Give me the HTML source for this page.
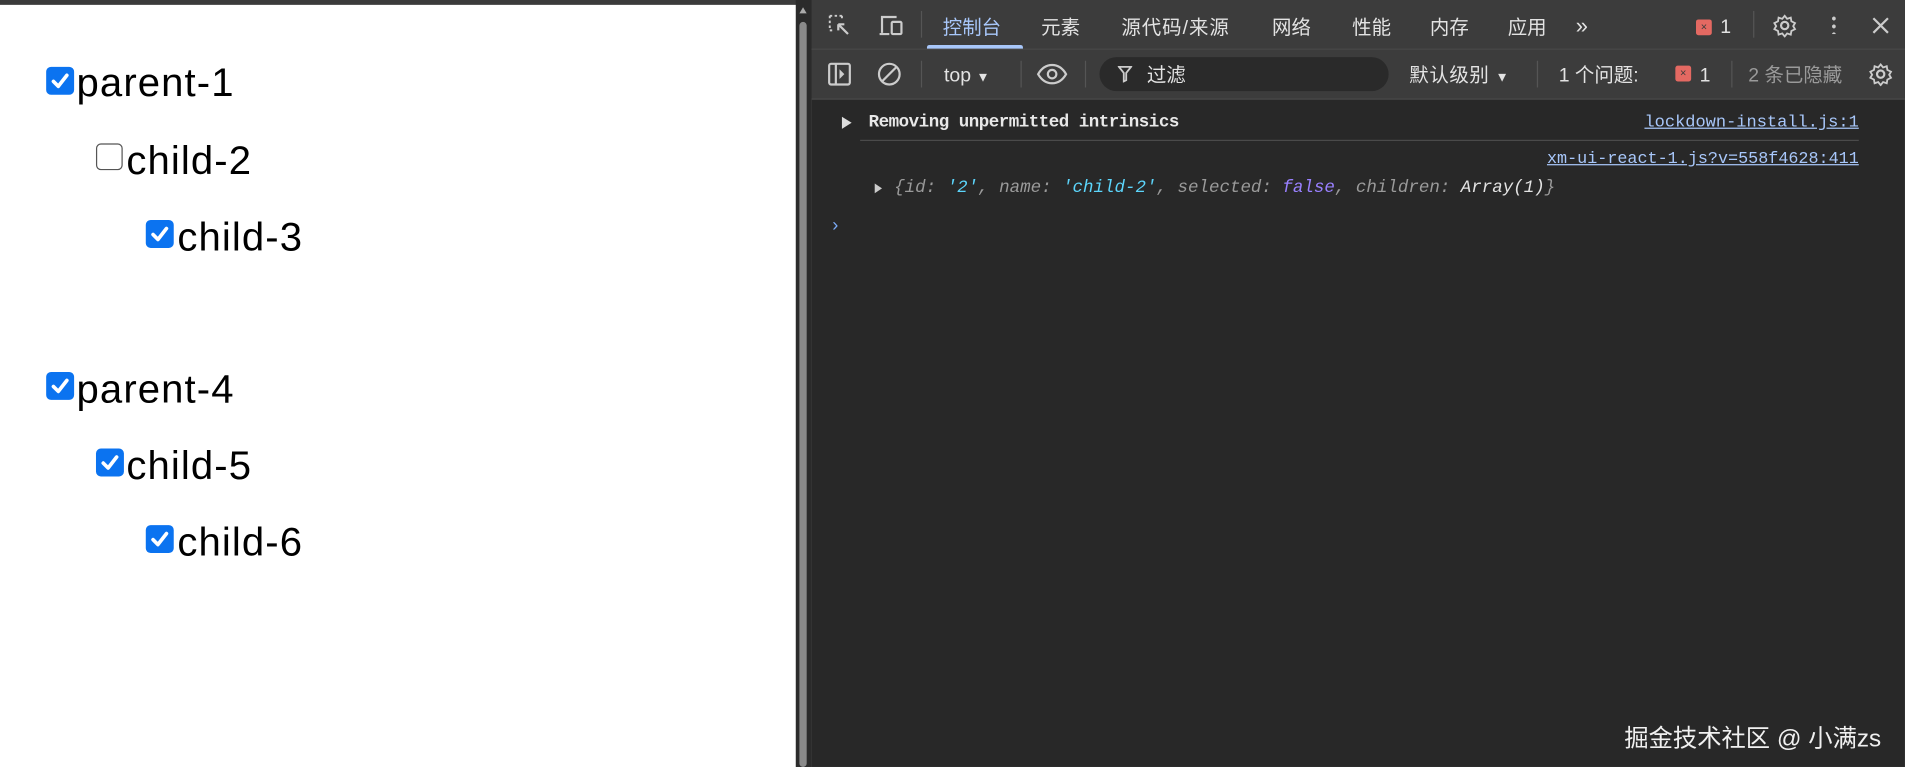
<!DOCTYPE html>
<html><head><meta charset="utf-8"><style>
html,body{margin:0;padding:0;width:1905px;height:767px;overflow:hidden;background:#fff}
#w{position:absolute;left:0;top:0;width:1568px;height:631px;transform:scale(1.2149,1.2155);transform-origin:0 0;font-family:"Liberation Sans","Noto Sans CJK SC",sans-serif}
.a{position:absolute;white-space:nowrap}
.topbar{position:absolute;left:0;top:0;width:656px;height:4px;background:#3b3b3b}
.cb{position:absolute;width:23px;height:23px;border-radius:4px;background:#0b73f0}
.cb svg{position:absolute;left:3px;top:3px}
.cbu{position:absolute;width:20px;height:20px;border-radius:4px;border:1.5px solid #555;background:#fff}
.lt{position:absolute;font-size:33px;letter-spacing:0.9px;color:#000;line-height:32px}
.dt{position:absolute;left:668px;top:0;width:900px;height:631px;background:#282828}
.sb{position:absolute;left:655px;top:0;width:13px;height:631px;background:#2b2b2b}
.t1{position:absolute;left:0;top:0;width:900px;height:40px;background:#3c3c3c;border-bottom:1px solid #4a4a4a}
.t2{position:absolute;left:0;top:41px;width:900px;height:40px;background:#3c3c3c;border-bottom:1px solid #4a4a4a}
.tab{position:absolute;top:15px;font-size:16px;line-height:18px;color:#e3e3e3}
.t2 .tab{top:13px}
.sep{position:absolute;width:1px;height:22px;background:#555}
.mono{font-family:"Liberation Mono","Noto Sans CJK SC",monospace;font-size:14.4px}
</style></head><body><div id="w">
<div class="topbar"></div>
<div class="cb" style="left:38px;top:55px"><svg width="17" height="17" viewBox="0 0 17 17"><path d="M3 9l4 4 7-9" stroke="#fff" stroke-width="3" fill="none" stroke-linecap="round" stroke-linejoin="round"/></svg></div>
<div class="lt" style="left:63px;top:52px">parent-1</div>
<div class="cbu" style="left:79px;top:118px"></div>
<div class="lt" style="left:104px;top:116px">child-2</div>
<div class="cb" style="left:120px;top:181px"><svg width="17" height="17" viewBox="0 0 17 17"><path d="M3 9l4 4 7-9" stroke="#fff" stroke-width="3" fill="none" stroke-linecap="round" stroke-linejoin="round"/></svg></div>
<div class="lt" style="left:146px;top:179px">child-3</div>
<div class="cb" style="left:38px;top:306px"><svg width="17" height="17" viewBox="0 0 17 17"><path d="M3 9l4 4 7-9" stroke="#fff" stroke-width="3" fill="none" stroke-linecap="round" stroke-linejoin="round"/></svg></div>
<div class="lt" style="left:63px;top:304px">parent-4</div>
<div class="cb" style="left:79px;top:369px"><svg width="17" height="17" viewBox="0 0 17 17"><path d="M3 9l4 4 7-9" stroke="#fff" stroke-width="3" fill="none" stroke-linecap="round" stroke-linejoin="round"/></svg></div>
<div class="lt" style="left:104px;top:367px">child-5</div>
<div class="cb" style="left:120px;top:432px"><svg width="17" height="17" viewBox="0 0 17 17"><path d="M3 9l4 4 7-9" stroke="#fff" stroke-width="3" fill="none" stroke-linecap="round" stroke-linejoin="round"/></svg></div>
<div class="lt" style="left:146px;top:430px">child-6</div>
<div class="sb"><div style="position:absolute;left:3px;top:18px;width:6px;height:613px;border-radius:3px;background:#8a8a8a"></div><div style="position:absolute;left:3px;top:6px;width:0;height:0;border-left:3px solid transparent;border-right:3px solid transparent;border-bottom:5px solid #aaa"></div></div>
<div class="dt">
 <div class="t1">
  <svg class="a" style="left:13px;top:11px" width="20" height="20" viewBox="0 0 20 20"><path d="M2 2h10M2 2v12M2 14h4M12 2v4" stroke="#ccc" stroke-width="1.6" stroke-dasharray="2 2" fill="none"/><path d="M9 9l8 8M9 9h5M9 9v5" stroke="#ccc" stroke-width="1.8" fill="none"/></svg>
  <svg class="a" style="left:55px;top:11px" width="22" height="20" viewBox="0 0 22 20"><path d="M3 16V3h12M1 17h8" stroke="#ccc" stroke-width="1.8" fill="none"/><rect x="11" y="7" width="8" height="10" rx="1" stroke="#ccc" stroke-width="1.8" fill="none"/></svg>
  <div class="sep" style="left:90px;top:9px"></div>
  <div class="tab" style="left:108px;color:#a8c7fa">控制台</div>
  <div class="a" style="left:95px;top:37px;width:79px;height:3px;background:#a8c7fa;border-radius:2px 2px 0 0"></div>
  <div class="tab" style="left:189px">元素</div>
  <div class="tab" style="left:255px;letter-spacing:0.8px">源代码/来源</div>
  <div class="tab" style="left:379px">网络</div>
  <div class="tab" style="left:445px">性能</div>
  <div class="tab" style="left:509px">内存</div>
  <div class="tab" style="left:573px">应用</div>
  <div class="tab" style="left:629px;top:12px;font-size:18px">»</div>
  <div class="a" style="left:728px;top:16px;width:13px;height:13px;background:#e46962;border-radius:2px;color:#3c3c3c;font-size:9px;text-align:center;line-height:13px">×</div>
  <div class="tab" style="left:748px;top:14px">1</div>
  <div class="sep" style="left:775px;top:9px"></div>
  <svg class="a" style="left:791px;top:11px" width="20" height="20" viewBox="0 0 20 20"><circle cx="10" cy="10" r="3" stroke="#ccc" stroke-width="1.8" fill="none"/><path d="M10 2l2 2.5 3-1 .5 3 3 1.5-1.5 2.5 1.5 2.5-3 1.5-.5 3-3-1-2 2.5-2-2.5-3 1-.5-3-3-1.5 1.5-2.5-1.5-2.5 3-1.5.5-3 3 1z" stroke="#ccc" stroke-width="1.5" fill="none"/></svg>
  <div class="a" style="left:840px;top:12px;width:3px;height:16px;background:radial-gradient(circle,#ccc 1.5px,transparent 1.6px) 0 0/3px 6.5px"></div>
  <svg class="a" style="left:873px;top:14px" width="14" height="14" viewBox="0 0 14 14"><path d="M1 1l12 12M13 1L1 13" stroke="#ccc" stroke-width="1.8"/></svg>
 </div>
 <div class="t2">
  <svg class="a" style="left:13px;top:10px" width="20" height="20" viewBox="0 0 20 20"><rect x="1.5" y="1.5" width="17" height="17" rx="1.5" stroke="#ccc" stroke-width="1.8" fill="none"/><path d="M7 2v16" stroke="#ccc" stroke-width="1.8"/><path d="M10 6l4 4-4 4z" fill="#ccc"/></svg>
  <svg class="a" style="left:54px;top:10px" width="20" height="20" viewBox="0 0 20 20"><circle cx="10" cy="10" r="8.5" stroke="#ccc" stroke-width="1.8" fill="none"/><path d="M4 16L16 4" stroke="#ccc" stroke-width="1.8"/></svg>
  <div class="sep" style="left:90px;top:9px"></div>
  <div class="tab" style="left:109px">top <span style="font-size:11px">▼</span></div>
  <div class="sep" style="left:172px;top:9px"></div>
  <svg class="a" style="left:185px;top:11px" width="26" height="18" viewBox="0 0 26 18"><path d="M1.5 9C5 3 9 1.5 13 1.5S21 3 24.5 9C21 15 17 16.5 13 16.5S5 15 1.5 9z" stroke="#ccc" stroke-width="1.8" fill="none"/><circle cx="13" cy="9" r="3.5" stroke="#ccc" stroke-width="1.8" fill="none"/></svg>
  <div class="sep" style="left:225px;top:9px"></div>
  <div class="a" style="left:237px;top:6px;width:238px;height:28px;border-radius:14px;background:#2a2a2a"></div>
  <svg class="a" style="left:252px;top:13px" width="12" height="14" viewBox="0 0 12 14"><path d="M1 1h10L7 6v6L5 13V6z" stroke="#ccc" stroke-width="1.5" fill="none"/></svg>
  <div class="tab" style="left:276px">过滤</div>
  <div class="tab" style="left:492px;letter-spacing:0.5px">默认级别 <span style="font-size:11px">▼</span></div>
  <div class="sep" style="left:597px;top:9px"></div>
  <div class="tab" style="left:615px">1 个问题:</div>
  <div class="a" style="left:711px;top:13px;width:13px;height:13px;background:#e46962;border-radius:2px;color:#3c3c3c;font-size:9px;text-align:center;line-height:13px">×</div>
  <div class="tab" style="left:731px">1</div>
  <div class="sep" style="left:757px;top:9px"></div>
  <div class="tab" style="left:771px;color:#9a9a9a">2 条已隐藏</div>
  <svg class="a" style="left:870px;top:10px" width="20" height="20" viewBox="0 0 20 20"><circle cx="10" cy="10" r="3" stroke="#ccc" stroke-width="1.8" fill="none"/><path d="M10 2l2 2.5 3-1 .5 3 3 1.5-1.5 2.5 1.5 2.5-3 1.5-.5 3-3-1-2 2.5-2-2.5-3 1-.5-3-3-1.5 1.5-2.5-1.5-2.5 3-1.5.5-3 3 1z" stroke="#ccc" stroke-width="1.5" fill="none"/></svg>
 </div>
 <div class="a" style="left:25px;top:96px;width:0;height:0;border-top:5px solid transparent;border-bottom:5px solid transparent;border-left:8px solid #ddd"></div>
 <div class="a mono" style="left:47px;top:93px;color:#e8e8e8;font-weight:bold;font-size:14.4px;letter-spacing:-0.4px">Removing unpermitted intrinsics</div>
 <div class="a mono" style="right:38px;top:93px;color:#a8c7fa;text-decoration:underline;font-size:14px">lockdown-install.js:1</div>
 <div class="a" style="left:40px;top:115px;width:822px;height:1px;background:#4a4a4a"></div>
 <div class="a mono" style="right:38px;top:124px;color:#a8c7fa;text-decoration:underline;font-size:13.8px">xm-ui-react-1.js?v=558f4628:411</div>
 <div class="a" style="left:52px;top:151px;width:0;height:0;border-top:4px solid transparent;border-bottom:4px solid transparent;border-left:6px solid #ccc"></div>
 <div class="a mono" style="left:68px;top:147px;font-style:italic;color:#9a9a9a">{id: <span style="color:#5cd5fb">'2'</span>, name: <span style="color:#5cd5fb">'child-2'</span>, selected: <span style="color:#9980ff">false</span>, children: <span style="color:#e3e3e3">Array(1)</span>}</div>
 <div class="a" style="left:17px;top:177px;color:#7cacf8;font-size:15px">›</div>
 <div class="a" style="left:669px;top:591px;color:#f0f0f0;font-size:20px">掘金技术社区 @ 小满zs</div>
</div>
</div></body></html>
